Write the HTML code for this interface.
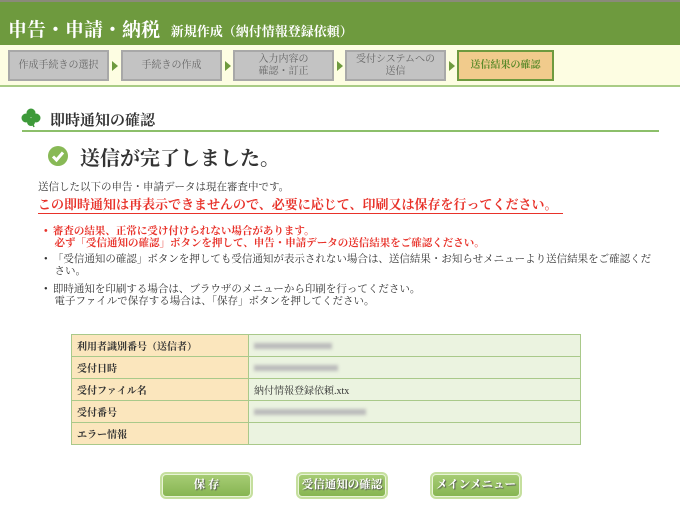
<!DOCTYPE html>
<html><head><meta charset="utf-8"><style>
*{margin:0;padding:0;box-sizing:border-box}
body{width:680px;height:532px;background:#fff;font-family:"Liberation Serif","Noto Serif CJK SC",serif;color:#333;position:relative;overflow:hidden}
.abs{position:absolute;white-space:nowrap}
#hdr{position:absolute;left:0;top:0;width:680px;height:45px;background:#6e9a3e;border-top:2px solid #8a8a7a}
#bar{position:absolute;left:0;top:45px;width:680px;height:42px;background:#fdfde2;border-bottom:2px solid #a9cc85}
.st{position:absolute;top:5px;height:31px;background:#c3c3c3;border:2px solid #a8a8a8;color:#666;font-size:10px;text-align:center;display:flex;align-items:center;justify-content:center;line-height:12px}
.ar{position:absolute;top:16px;width:0;height:0;border-left:6px solid #6e9a3e;border-top:5px solid transparent;border-bottom:5px solid transparent}
table{position:absolute;left:71px;top:334px;width:510px;border-collapse:collapse}
td{border:1px solid #a9c98a;height:22px;font-size:10px;padding:0 5px}
td.k{background:#fbe6bd;width:177px;font-weight:bold}
td.v{background:#ebf3e0}
.blur{display:inline-block;height:6px;background:#bbb;filter:blur(1.5px);vertical-align:middle}
.btn{position:absolute;top:472px;height:27px;border-radius:6px;background:#c5df9e;padding:2px}
.btn div{height:23px;border-radius:4px;background:linear-gradient(#a6cc74,#87b552);border:1px solid #e8f4d6;color:#fff;font-weight:bold;font-size:11.5px;text-align:center;line-height:21px;text-shadow:1px 1px 1px #555}
</style></head><body>
<div id="hdr"></div>
<div class="abs" style="left:8px;top:15px;color:#fff;font-size:19px;font-weight:bold">申告・申請・納税 <span style="font-size:13px;margin-left:6px">新規作成（納付情報登録依頼）</span></div>
<div id="bar">
<div class="st" style="left:8px;width:101px">作成手続きの選択</div><div class="ar" style="left:112px"></div>
<div class="st" style="left:121px;width:101px">手続きの作成</div><div class="ar" style="left:225px"></div>
<div class="st" style="left:233px;width:101px">入力内容の<br>確認・訂正</div><div class="ar" style="left:337px"></div>
<div class="st" style="left:345px;width:101px">受付システムへの<br>送信</div><div class="ar" style="left:449px"></div>
<div class="st" style="left:457px;width:97px;background:#f1cb8c;border-color:#6e9a3e;color:#5a8a2a;font-weight:bold">送信結果の確認</div>
</div>
<svg class="abs" style="left:21px;top:108px" width="20" height="20" viewBox="0 0 20 20"><g fill="#3e9a3a"><circle cx="10" cy="5" r="4.5"/><circle cx="5" cy="10" r="4.5"/><circle cx="15" cy="10" r="4.5"/><circle cx="10" cy="14" r="4"/></g><path d="M10 12 L13 19" stroke="#3e9a3a" stroke-width="1.5"/></svg>
<div class="abs" style="left:50px;top:109px;font-size:15px;font-weight:bold;color:#333">即時通知の確認</div>
<div class="abs" style="left:22px;top:130px;width:637px;height:2px;background:#8cbf6a"></div>
<svg class="abs" style="left:47px;top:145px" width="22" height="22" viewBox="0 0 22 22"><circle cx="11" cy="11" r="10" fill="#88b956"/><path d="M6 11.5 L9.5 15 L16 7.5" stroke="#fff" stroke-width="3" fill="none"/></svg>
<div class="abs" style="left:80px;top:142px;font-size:20px;font-weight:bold;color:#333">送信が完了しました。</div>
<div class="abs" style="left:38px;top:179px;font-size:10.5px">送信した以下の申告・申請データは現在審査中です。</div>
<div class="abs" style="left:38px;top:196px;font-size:13px;font-weight:bold;color:#e8322a;border-bottom:1px solid #e8322a;padding-right:6px;line-height:17px">この即時通知は再表示できませんので、必要に応じて、印刷又は保存を行ってください。</div>
<div class="abs" style="left:44px;top:226px;font-size:10.5px;line-height:12px">
<div style="color:#e8322a;font-weight:bold">•&nbsp; 審査の結果、正常に受け付けられない場合があります。<br>&nbsp;&nbsp;&nbsp;&nbsp;必ず「受信通知の確認」ボタンを押して、申告・申請データの送信結果をご確認ください。</div>
<div style="margin-top:4px">•&nbsp; 「受信通知の確認」ボタンを押しても受信通知が表示されない場合は、送信結果・お知らせメニューより送信結果をご確認くだ<br>&nbsp;&nbsp;&nbsp;&nbsp;さい。</div>
<div style="margin-top:6px">•&nbsp; 即時通知を印刷する場合は、ブラウザのメニューから印刷を行ってください。<br>&nbsp;&nbsp;&nbsp;&nbsp;電子ファイルで保存する場合は、「保存」ボタンを押してください。</div>
</div>
<table>
<tr><td class="k">利用者識別番号（送信者）</td><td class="v"><span class="blur" style="width:78px"></span></td></tr>
<tr><td class="k">受付日時</td><td class="v"><span class="blur" style="width:84px"></span></td></tr>
<tr><td class="k">受付ファイル名</td><td class="v">納付情報登録依頼.xtx</td></tr>
<tr><td class="k">受付番号</td><td class="v"><span class="blur" style="width:112px"></span></td></tr>
<tr><td class="k">エラー情報</td><td class="v"></td></tr>
</table>
<div class="btn" style="left:160px;width:93px"><div>保 存</div></div>
<div class="btn" style="left:296px;width:92px"><div>受信通知の確認</div></div>
<div class="btn" style="left:430px;width:92px"><div>メインメニュー</div></div>
</body></html>
